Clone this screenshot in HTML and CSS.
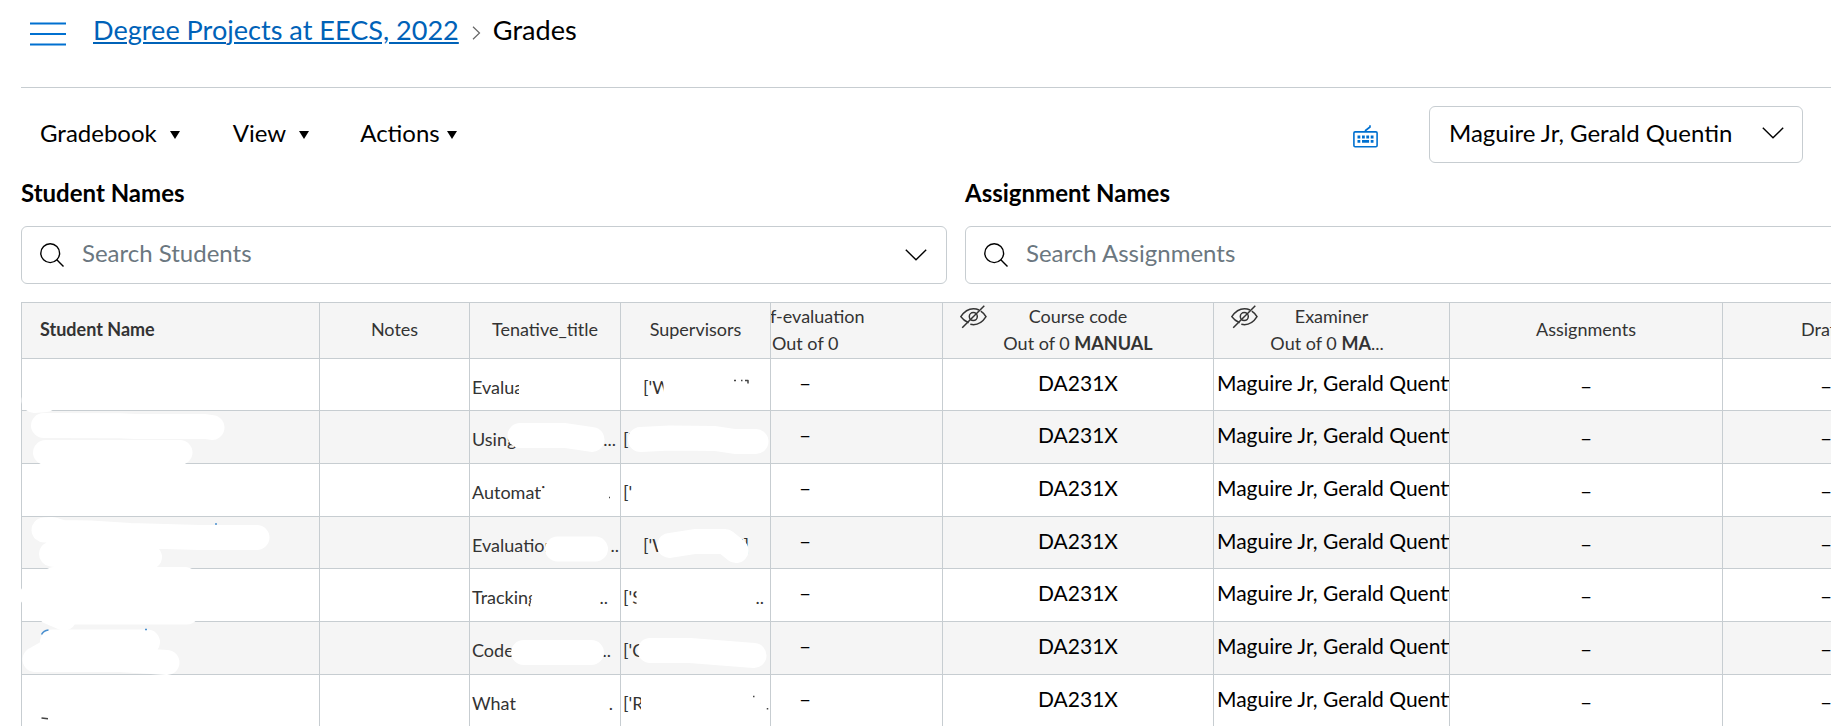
FILE: index.html
```html
<!DOCTYPE html>
<html lang="en">
<head>
<meta charset="utf-8">
<title>Grades</title>
<link rel="stylesheet" href="styles.css">
</head>
<body>
<svg class="defs" width="0" height="0">
  <symbol id="search" viewBox="0 0 24 24"><circle cx="10.2" cy="10.2" r="9.4"/><path d="M16.8 16.8 23.5 23.5"/></symbol>
  <symbol id="down" viewBox="0 0 22 12"><path d="M.8.8 11 10.8 21.2.8"/></symbol>
  <symbol id="hidden" viewBox="0 0 27 24"><path d="M8.6 17.7C5 16.2 2.200 13.800.8 11.700 3.500 7.500 8 3.700 13.500 3.700c2 0 3.900.5 5.500 1.300M20.800 6.200c2.400 1.600 4.200 3.700 5.200 5.500-2.700 4.300-7.200 8-12.500 8-1.100 0-2.200-.2-3.200-.4"/><circle cx="13.300" cy="11.600" r="4"/><path d="M2.200 22.800 24.300.7"/></symbol>
</svg>
<header class="crumbs">
  <svg class="menu" width="36" height="24" viewBox="0 0 36 24"><path d="M0 1.500h36M0 12h36M0 22.500h36"/></svg>
  <a class="course" href="#">Degree Projects at EECS, 2022</a>
  <svg class="sep" width="9" height="14" viewBox="0 0 9 14"><path d="M1 .7 7.500 7 1 13.300"/></svg>
  <span class="current">Grades</span>
</header>
<nav class="toolbar">
  <button class="menu-btn gradebook">Gradebook<i class="caret"></i></button>
  <button class="menu-btn view">View<i class="caret"></i></button>
  <button class="menu-btn actions">Actions<i class="caret"></i></button>
  <svg class="keyboard" width="25" height="23" viewBox="0 0 25 23"><rect x=".9" y="6.900" width="23.200" height="14.800" rx="1.200"/><path d="M12.500 6.500V5.500L17 2V.3"/><path class="keys" d="M4.500 12h2.800M9 12h2.800M13.300 12h2.800M17.700 12h2.800M4.500 16.300h2.800M9 16.300h7.100M17.700 16.300h2.800"/></svg>
  <div class="select"><span>Maguire Jr, Gerald Quentin</span><svg class="ico" width="22" height="12"><use href="#down"/></svg></div>
</nav>
<section class="filters">
  <div class="filter">
    <label class="label">Student Names</label>
    <div class="field"><svg class="ico" width="24" height="24"><use href="#search"/></svg><span>Search Students</span><svg class="ico" width="22" height="12"><use href="#down"/></svg></div>
  </div>
  <div class="filter">
    <label class="label">Assignment Names</label>
    <div class="field"><svg class="ico" width="24" height="24"><use href="#search"/></svg><span>Search Assignments</span></div>
  </div>
</section>
<main class="grid">
  <div class="row head">
    <div class="cell name">Student Name</div><div class="cell">Notes</div><div class="cell">Tenative_title</div><div class="cell">Supervisors</div>
    <div class="cell two self"><span>f-evaluation</span><span>Out of 0</span></div>
    <div class="cell two"><svg class="eye" width="27" height="24"><use href="#hidden"/></svg><span>Course code</span><span>Out of 0 <b>MANUAL</b></span></div>
    <div class="cell two"><svg class="eye" width="27" height="24"><use href="#hidden"/></svg><span>Examiner</span><span class="short">Out of 0 <b>MA</b>...</span></div>
    <div class="cell">Assignments</div><div class="cell draft">Draft</div>
  </div>
  <div class="row"><div class="cell"></div><div class="cell"></div><div class="cell custom">Evalua</div><div class="cell custom inset">['W</div><div class="cell dash">–</div><div class="cell grade">DA231X</div><div class="cell grade examiner">Maguire Jr, Gerald Quentin</div><div class="cell total">–</div><div class="cell total last">–</div></div>
  <div class="row"><div class="cell"></div><div class="cell"></div><div class="cell custom">Using<span class="dots">...</span></div><div class="cell custom">['</div><div class="cell dash">–</div><div class="cell grade">DA231X</div><div class="cell grade examiner">Maguire Jr, Gerald Quentin</div><div class="cell total">–</div><div class="cell total last">–</div></div>
  <div class="row"><div class="cell"></div><div class="cell"></div><div class="cell custom">Automati</div><div class="cell custom">['</div><div class="cell dash">–</div><div class="cell grade">DA231X</div><div class="cell grade examiner">Maguire Jr, Gerald Quentin</div><div class="cell total">–</div><div class="cell total last">–</div></div>
  <div class="row"><div class="cell"></div><div class="cell"></div><div class="cell custom r4">Evaluation<span class="dots">..</span></div><div class="cell custom inset">['W<span class="dots end">']</span></div><div class="cell dash">–</div><div class="cell grade">DA231X</div><div class="cell grade examiner">Maguire Jr, Gerald Quentin</div><div class="cell total">–</div><div class="cell total last">–</div></div>
  <div class="row"><div class="cell"></div><div class="cell"></div><div class="cell custom r5">Tracking<span class="dots">..</span></div><div class="cell custom">['S<span class="dots sup">..</span></div><div class="cell dash">–</div><div class="cell grade">DA231X</div><div class="cell grade examiner">Maguire Jr, Gerald Quentin</div><div class="cell total">–</div><div class="cell total last">–</div></div>
  <div class="row"><div class="cell"></div><div class="cell"></div><div class="cell custom r6">Code<span class="dots">..</span></div><div class="cell custom">['C</div><div class="cell dash">–</div><div class="cell grade">DA231X</div><div class="cell grade examiner">Maguire Jr, Gerald Quentin</div><div class="cell total">–</div><div class="cell total last">–</div></div>
  <div class="row"><div class="cell"></div><div class="cell"></div><div class="cell custom r7">What<span class="dots">.</span></div><div class="cell custom">['R</div><div class="cell dash">–</div><div class="cell grade">DA231X</div><div class="cell grade examiner">Maguire Jr, Gerald Quentin</div><div class="cell total">–</div><div class="cell total last">–</div></div>
</main>
<!-- freehand redaction strokes over student data -->
<svg class="redact" width="1831" height="726" viewBox="0 0 1831 726">
  <path d="M34 400.500 46 399.500M43.500 425.500 120 425.800 135 426.500H205L212 427.500M45.500 452.500H180"/>
  <path d="M44 530 52 529.500 62 532.500 90 533 130 535.500 200 537.500H257M51.500 554 80 557H149.500M54 579.500H185M32 595.500H60M55 612H187M50 612 64 618"/>
  <path d="M52.500 642H147.500M35 659.500 55 648M35 659.500H120L167 662.500"/>
  <path d="M520 435.500H565L592 439.500M557.500 549H595.500M523.500 652.500H591.500"/>
  <path d="M640.500 439.500 670 438 715 438.500 735 441.500H756M669.500 545.500 695 541.500H725L736 550.500M650 650.500H690L754 655.500"/>
  <path class="cuts" d="M519 370h20v35h-20zM663.500 370h20v35h-20zM541 488.500h12v15h-12zM534 585l-4 22h20v-22zM636.500 585h10v20h-10zM641 690h10v25h-10z"/>
  <g class="marks"><path d="M734 380.500h2M741 380.500h1.500M745 380.500h3v3M41.500 718l6.500.8M609 497.500h1M753 696.500h1.500M767.500 708v1.500"/><path class="blue" d="M215 524h2M41.500 634.500q2-4 7-4.500M145 629.500h2"/></g>
</svg>
</body>
</html>
```
FILE: styles.css
```css
* { box-sizing: border-box; }
body { margin: 0; height: 726px; overflow: hidden; position: relative; background: #fff; color: #000; font-family: Lato, "Liberation Sans", sans-serif; font-size: 24px; }
.defs { position: absolute; }
svg { fill: none; flex: none; display: block; }
.ico { stroke: #000; stroke-width: 1.4; }
.crumbs { height: 88px; margin-left: 21px; padding: 0 0 28px 9px; border-bottom: 1px solid #c7cdd1; display: flex; align-items: center; font-size: 27.080px; line-height: 34px; white-space: nowrap; }
.menu { stroke: #0070d0; stroke-width: 2; margin: 8px 27px 0 0; }
.course { color: #0062b8; text-decoration: underline; text-decoration-thickness: 2px; text-underline-offset: 2px; }
.sep { stroke: #666; stroke-width: 1.2; margin: 7px 12px 0 13px; }
.toolbar { height: 88px; display: flex; align-items: center; padding: 4px 28px 0 40px; }
.menu-btn { border: 0; background: none; padding: 0 0 2px; font: inherit; color: inherit; display: flex; align-items: center; line-height: 28px; height: 32px; }
.caret { border: 5.500px solid transparent; border-top: 8px solid #000; border-bottom: 0; margin: 4px 0 0 13px; }
.view { margin-left: 53px; }
.actions { margin-left: 51px; }
.actions .caret { margin-left: 7px; }
.keyboard { stroke: #0070d0; stroke-width: 1.600; margin: 4px 51px 0 auto; }
.keys { stroke-width: 2.800; }
.select { width: 374px; height: 57px; border: 1px solid #c7cdd1; border-radius: 6px; display: flex; align-items: center; justify-content: space-between; padding: 0 18px 2px 19px; white-space: nowrap; }
.select span { padding-bottom: 2px; }
.filters { display: grid; grid-template-columns: 926px 926px; gap: 18px; margin-left: 21px; height: 126px; }
.label { display: block; height: 50px; padding-top: 3px; font-weight: 700; line-height: 27px; }
.field { height: 58px; border: 1px solid #c7cdd1; border-radius: 6px; display: flex; align-items: center; padding: 0 19px 0 18px; color: #6b7780; }
.field span { margin: 0 auto 6px 18px; }
.grid { margin-left: 21px; width: 1850px; border-top: 1px solid #c7cdd1; display: grid; grid-template-rows: 56px 52px 53px 53px 52px 53px 53px 53px; }
.row { display: grid; grid-template-columns: 298px 150px 151px 150px 172px 271px 236px 273px 149px; border-bottom: 1px solid #c7cdd1; }
.row:nth-child(odd) { background: #f5f5f5; }
.cell { border-left: 1px solid #c7cdd1; min-width: 0; overflow: hidden; white-space: nowrap; position: relative; text-align: center; font-size: 21px; }
.head .cell { font-size: 18px; line-height: 52px; color: #333; }
.head .name { text-align: left; padding-left: 18px; font-weight: 700; }
.head .two { display: flex; flex-direction: column; line-height: 27px; }
.head .self { text-align: left; }
.self span:first-of-type { margin-left: -1px; }
.self span + span { padding-left: 1px; }
.short { padding-right: 9px; }
.eye { position: absolute; left: 17px; top: 2px; stroke: #333; stroke-width: 1.500; }
.head .draft { text-align: left; padding-left: 78px; }
.custom { display: flex; font-size: 18px; line-height: 56px; color: #333; padding-left: 2px; }
.inset { padding-left: 22px; }
.dots { margin-left: auto; padding-right: 4px; }
.r4 .dots { padding-right: 1px; }
.r5 .dots { padding-right: 12px; }
.r6 .dots { padding-right: 9px; }
.r7 .dots { padding-right: 7px; }
.dots.end { padding-right: 21px; }
.dots.sup { padding-right: 6px; }
.grade { line-height: 48px; }
.examiner { text-align: left; padding-left: 3px; }
.dash { text-align: left; padding-left: 28px; line-height: 48px; }
.total { line-height: 54px; }
.last { text-align: left; padding-left: 97px; }
.redact { position: absolute; left: 0; top: 0; stroke: #fff; stroke-width: 25; stroke-linecap: round; stroke-linejoin: round; pointer-events: none; }
.cuts { fill: #fff; stroke: none; }
.marks { stroke: #444; stroke-width: 1.500; stroke-linecap: butt; }
.blue { stroke: #4a90d0; }
```
